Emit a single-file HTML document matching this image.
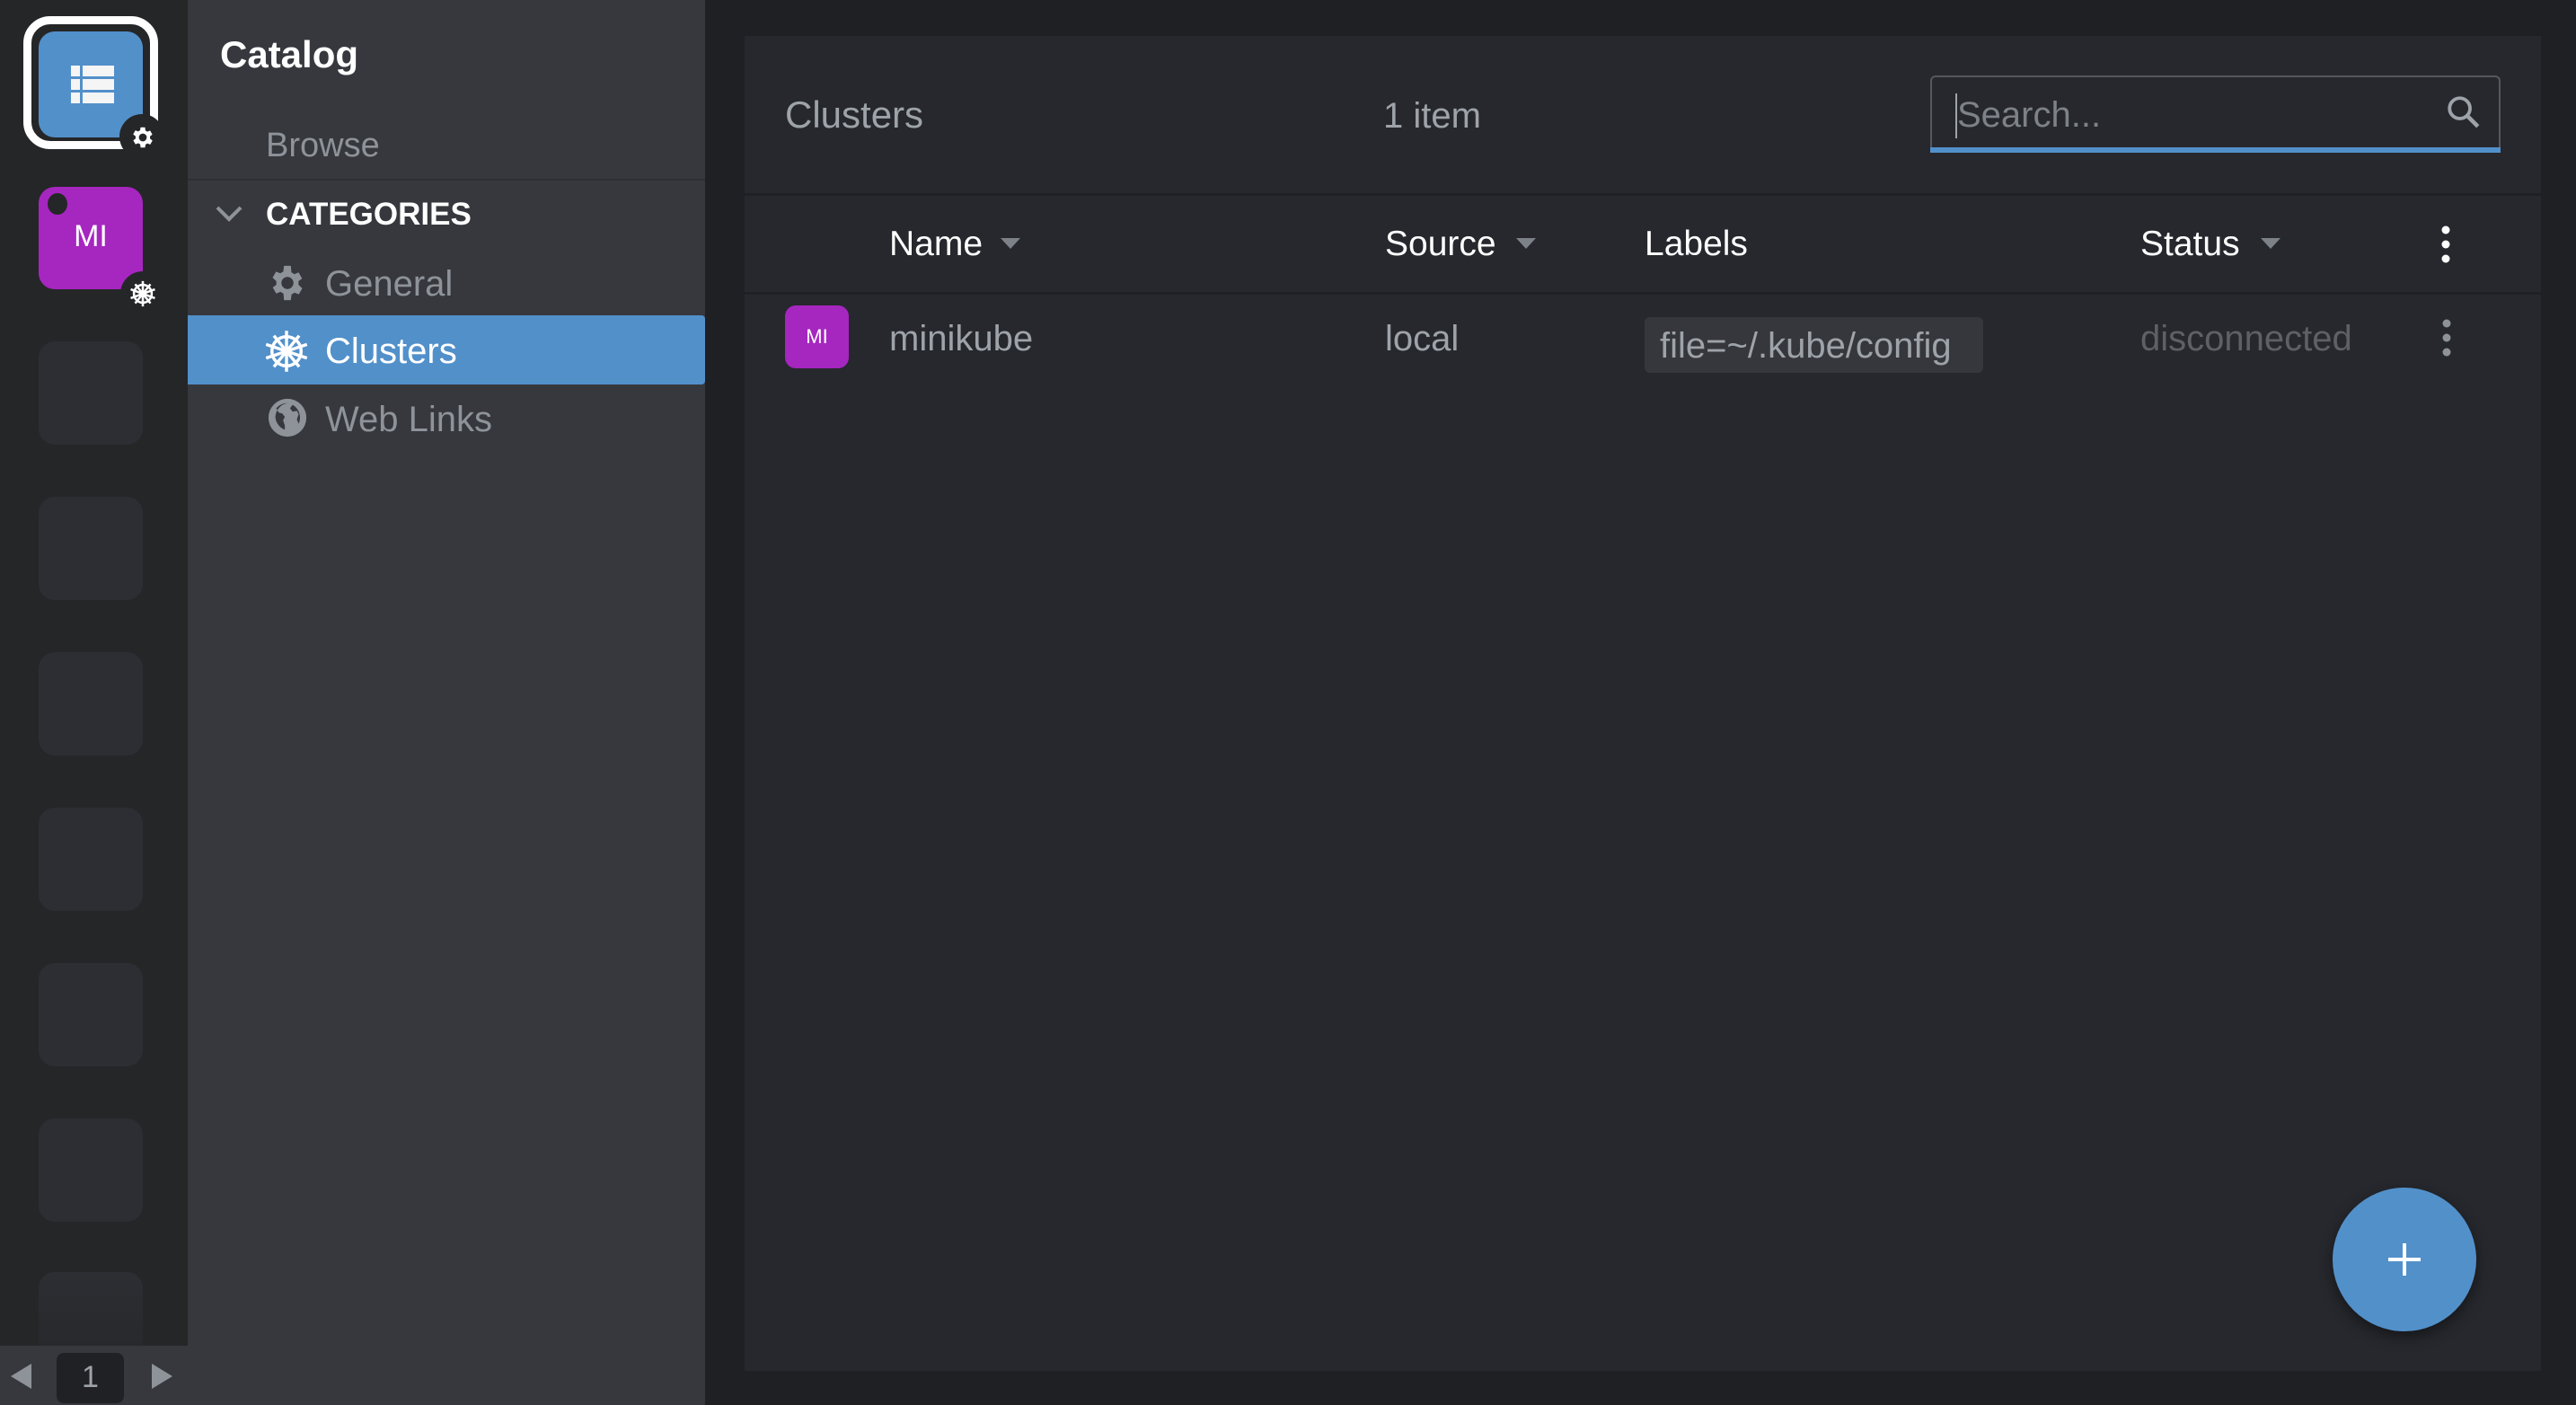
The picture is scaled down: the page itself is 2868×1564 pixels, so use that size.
<!DOCTYPE html>
<html><head><meta charset="utf-8">
<style>
*{margin:0;padding:0;box-sizing:border-box}
body{width:2868px;height:1564px;background:#1f2024;font-family:"Liberation Sans",sans-serif;position:relative;overflow:hidden}
.abs{position:absolute}
.rail{left:0;top:0;width:209px;height:1564px;background:#252628}
.tile{position:absolute;left:43px;width:116px;height:115px;border-radius:18px;background:#2d2e33}
.side{left:209px;top:0;width:576px;height:1564px;background:#37383e}
.t{position:absolute;white-space:nowrap;line-height:1}
.main{left:829px;top:40px;width:2000px;height:1486px;background:#26282d}
</style></head><body>
<div class="abs rail">
  <div class="abs" style="left:26px;top:18px;width:150px;height:148px;border:9px solid #fff;border-radius:30px"></div>
  <div class="abs" style="left:43px;top:35px;width:116px;height:118px;border-radius:18px;background:#5290ca"></div>
  <svg class="abs" style="left:79px;top:73px" width="48" height="42" viewBox="0 0 48 42"><g fill="#f5f5f5"><rect x="0" y="0" width="10" height="12"/><rect x="13" y="0" width="35" height="12"/><rect x="0" y="15" width="10" height="12"/><rect x="13" y="15" width="35" height="12"/><rect x="0" y="30" width="10" height="12"/><rect x="13" y="30" width="35" height="12"/></g></svg>
  <div class="abs" style="left:133px;top:127px;width:50px;height:50px;border-radius:50%;background:#252628"></div>
  <svg class="abs" style="left:144px;top:138px" width="30" height="30" viewBox="0 0 24 24"><path fill="#fff" d="M19.4 13a7.5 7.5 0 0 0 0-2l2.1-1.6-2-3.5-2.5 1a7 7 0 0 0-1.7-1L15 3h-4l-.4 2.7a7 7 0 0 0-1.7 1l-2.5-1-2 3.5L6.6 11a7.5 7.5 0 0 0 0 2l-2.1 1.6 2 3.5 2.5-1a7 7 0 0 0 1.7 1L11 21h4l.4-2.7a7 7 0 0 0 1.7-1l2.5 1 2-3.5zM13 15.5a3.5 3.5 0 1 1 0-7 3.5 3.5 0 0 1 0 7z" transform="translate(-1 0)"/></svg>
  <div class="abs" style="left:43px;top:208px;width:116px;height:114px;border-radius:18px;background:#a626c0"></div>
  <div class="abs" style="left:53px;top:215px;width:22px;height:24px;border-radius:50%;background:#252628"></div>
  <div class="t" style="left:43px;top:246px;width:116px;text-align:center;color:#fff;font-size:34px">MI</div>
  <div class="abs" style="left:134px;top:302px;width:50px;height:50px;border-radius:50%;background:#252628"></div>
  <svg class="abs" style="left:142px;top:310px" width="34" height="34" viewBox="0 0 24 24"><g fill="none" stroke="#fff" stroke-width="1.8"><circle cx="12" cy="12" r="7"/><path d="M12 2v20M2.5 8.5l19 7M2.5 15.5l19-7M6 4.5l12 15M18 4.5l-12 15"/></g><circle cx="12" cy="12" r="2" fill="#fff"/></svg>
  <div class="tile" style="top:380px"></div>
  <div class="tile" style="top:553px"></div>
  <div class="tile" style="top:726px"></div>
  <div class="tile" style="top:899px"></div>
  <div class="tile" style="top:1072px"></div>
  <div class="tile" style="top:1245px"></div>
  <div class="tile" style="top:1416px;background:linear-gradient(#2d2e33,#262729)"></div>
  <div class="abs" style="left:0;top:1498px;width:209px;height:66px;background:#37383e"></div>
  <div class="abs" style="left:63px;top:1506px;width:75px;height:56px;border-radius:8px;background:#202125"></div>
  <div class="t" style="left:63px;top:1516px;width:75px;text-align:center;color:#9ea3aa;font-size:34px">1</div>
  <svg class="abs" style="left:12px;top:1518px" width="180" height="28" viewBox="0 0 180 28"><path d="M23 0v28L0 14z" fill="#8e939a"/><path d="M157 0v28l23-14z" fill="#8e939a"/></svg>
</div>
<div class="abs side">
  <div class="t" style="left:36px;top:40px;color:#fff;font-size:42px;font-weight:bold">Catalog</div>
  <div class="t" style="left:87px;top:143px;color:#8e939a;font-size:38px">Browse</div>
  <div class="abs" style="left:0;top:199px;width:576px;height:2px;background:#2e2f34"></div>
  <svg class="abs" style="left:30px;top:228px" width="32" height="20" viewBox="0 0 32 20"><path d="M3 3l13 13L29 3" fill="none" stroke="#8e939a" stroke-width="4"/></svg>
  <div class="t" style="left:87px;top:221px;color:#fff;font-size:35px;font-weight:bold">CATEGORIES</div>
  <svg class="abs" style="left:88px;top:292px" width="46" height="46" viewBox="0 0 24 24"><path fill="#8e939a" d="M19.4 13a7.5 7.5 0 0 0 0-2l2.1-1.6-2-3.5-2.5 1a7 7 0 0 0-1.7-1L15 2h-4l-.4 3.4a7 7 0 0 0-1.7 1l-2.5-1-2 3.5L6.6 11a7.5 7.5 0 0 0 0 2l-2.1 1.6 2 3.5 2.5-1a7 7 0 0 0 1.7 1L11 22h4l.4-3.4a7 7 0 0 0 1.7-1l2.5 1 2-3.5zM13 15.5a3.5 3.5 0 1 1 0-7 3.5 3.5 0 0 1 0 7z" transform="translate(-1 0)"/></svg>
  <div class="t" style="left:153px;top:296px;color:#8e939a;font-size:40px">General</div>
  <div class="abs" style="left:0;top:351px;width:576px;height:77px;border-radius:0 4px 4px 0;background:#5290ca"></div>
  <svg class="abs" style="left:83px;top:365px" width="54" height="52" viewBox="0 0 24 24"><g fill="none" stroke="#fff" stroke-width="1.6"><circle cx="12" cy="12" r="7.5"/><path d="M12 1.5v21M1.5 8.5l21 7M1.5 15.5l21-7M5.5 4l13 16M18.5 4l-13 16"/></g><circle cx="12" cy="12" r="2" fill="#fff"/></svg>
  <div class="t" style="left:153px;top:371px;color:#fff;font-size:40px">Clusters</div>
  <svg class="abs" style="left:88px;top:442px" width="46" height="46" viewBox="0 0 24 24"><circle cx="12" cy="12" r="11" fill="#8e939a"/><path fill="#37383e" d="M12 3.5a8.5 8.5 0 0 0-6.5 3l1.5 2.5 2 .5 1.5 2-1 2 1 3v2.5a8.5 8.5 0 0 1-5.5-7.5A8.5 8.5 0 0 1 12 3.5zm3 1l-1.5 2 1.5 2 2.5-.5 1 2-1 3 1 2.5a8.5 8.5 0 0 0-3.5-11z"/></svg>
  <div class="t" style="left:153px;top:447px;color:#8e939a;font-size:40px">Web Links</div>
</div>
<div class="abs main">
  <div class="t" style="left:45px;top:67px;color:#9ea3aa;font-size:42px">Clusters</div>
  <div class="t" style="left:711px;top:69px;color:#9ea3aa;font-size:40px">1 item</div>
  <div class="abs" style="left:1320px;top:44px;width:635px;height:86px;border:2px solid #55585e;border-bottom:none;border-radius:6px 6px 0 0"></div>
  <div class="abs" style="left:1320px;top:124px;width:635px;height:6px;background:#5290ca"></div>
  <div class="abs" style="left:1348px;top:64px;width:2px;height:50px;background:#9ea3aa"></div>
  <div class="t" style="left:1350px;top:68px;color:#7d8188;font-size:40px">Search...</div>
  <svg class="abs" style="left:1893px;top:64px" width="42" height="42" viewBox="0 0 24 24"><circle cx="9.5" cy="9.5" r="6.5" fill="none" stroke="#9ea3aa" stroke-width="2.2"/><path d="M14 14l7 7" stroke="#9ea3aa" stroke-width="2.6"/></svg>
  <div class="abs" style="left:0;top:175px;width:2000px;height:3px;background:#1f2024"></div>
  <div class="t" style="left:161px;top:212px;color:#fff;font-size:39px">Name</div>
  <svg class="abs" style="left:285px;top:225px" width="22" height="12"><path d="M0 0h22L11 12z" fill="#7d8188"/></svg>
  <div class="t" style="left:713px;top:212px;color:#fff;font-size:39px">Source</div>
  <svg class="abs" style="left:859px;top:225px" width="22" height="12"><path d="M0 0h22L11 12z" fill="#7d8188"/></svg>
  <div class="t" style="left:1002px;top:212px;color:#fff;font-size:39px">Labels</div>
  <div class="t" style="left:1554px;top:212px;color:#fff;font-size:39px">Status</div>
  <svg class="abs" style="left:1688px;top:225px" width="22" height="12"><path d="M0 0h22L11 12z" fill="#7d8188"/></svg>
  <svg class="abs" style="left:1888px;top:210px" width="12" height="44"><circle cx="6" cy="6" r="4.5" fill="#fff"/><circle cx="6" cy="22" r="4.5" fill="#fff"/><circle cx="6" cy="38" r="4.5" fill="#fff"/></svg>
  <div class="abs" style="left:0;top:285px;width:2000px;height:3px;background:#1f2024"></div>
  <div class="abs" style="left:45px;top:300px;width:71px;height:70px;border-radius:12px;background:#a626c0"></div>
  <div class="t" style="left:45px;top:324px;width:71px;text-align:center;color:#fff;font-size:22px">MI</div>
  <div class="t" style="left:161px;top:317px;color:#9ea3aa;font-size:40px">minikube</div>
  <div class="t" style="left:713px;top:317px;color:#9ea3aa;font-size:40px">local</div>
  <div class="abs" style="left:1002px;top:313px;width:377px;height:62px;border-radius:6px;background:#36373c"></div>
  <div class="t" style="left:1019px;top:325px;color:#9ea3aa;font-size:40px">file=~/.kube/config</div>
  <div class="t" style="left:1554px;top:317px;color:#5d6066;font-size:40px">disconnected</div>
  <svg class="abs" style="left:1889px;top:314px" width="12" height="44"><circle cx="6" cy="6" r="4.5" fill="#8e939a"/><circle cx="6" cy="22" r="4.5" fill="#8e939a"/><circle cx="6" cy="38" r="4.5" fill="#8e939a"/></svg>
  <div class="abs" style="left:1768px;top:1282px;width:160px;height:160px;border-radius:50%;background:#5290ca;box-shadow:0 6px 16px rgba(0,0,0,.45)"></div>
  <svg class="abs" style="left:1830px;top:1344px" width="36" height="36"><path d="M18 0v36M0 18h36" stroke="#fff" stroke-width="4"/></svg>
</div>
</body></html>
